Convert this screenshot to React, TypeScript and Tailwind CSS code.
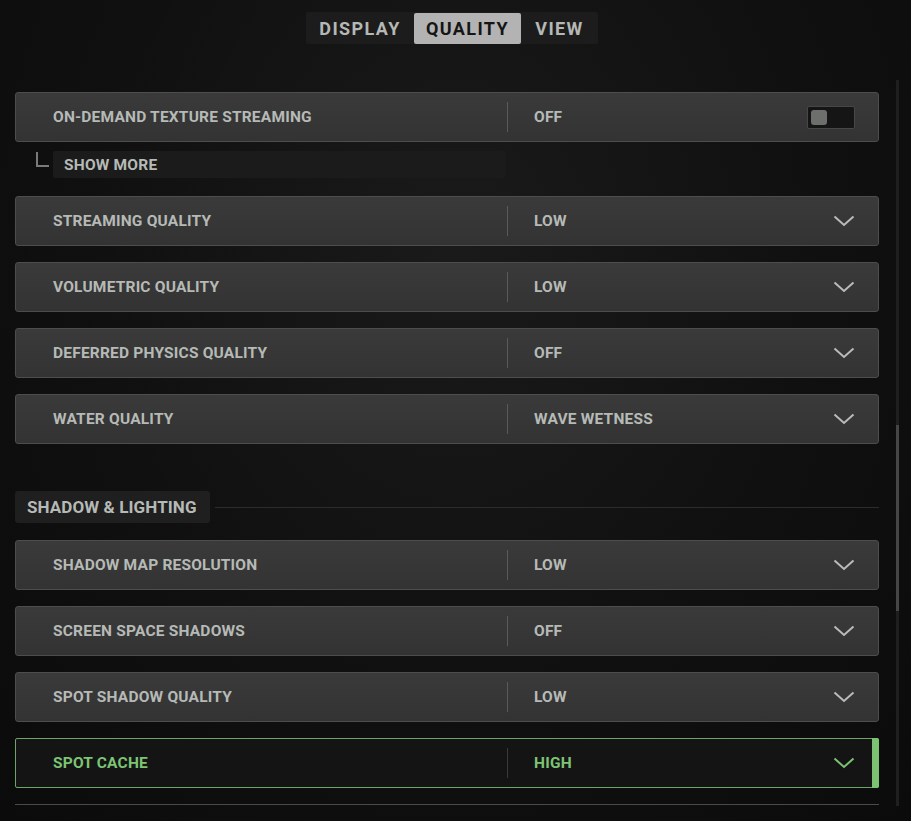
import React from "react";

const font = { fontFamily: "Roboto, 'DejaVu Sans', sans-serif" };

function Chevron({ green }: { green?: boolean }) {
  return (
    <svg width="22" height="12" viewBox="0 0 22 12" fill="none">
      <path d="M1.5 1.5 L11 10 L20.5 1.5" stroke={green ? "#7cc273" : "#b9bdb9"} strokeWidth="2" />
    </svg>
  );
}

function Row({ label, value, active }: { label: string; value: string; active?: boolean }) {
  return (
    <div
      className={
        active
          ? "relative flex h-[50px] w-[864px] items-center rounded-[2px] border border-[#6fa468] bg-[#141414]"
          : "flex h-[50px] w-[864px] items-center rounded-[3px] border border-[#4d4d4d] bg-gradient-to-b from-[#3a3a3a] to-[#333333]"
      }
    >
      <div
        className={
          "w-[491px] pl-[37px] pt-[2px] text-[15.5px] font-bold tracking-[0.2px] " +
          (active ? "text-[#7dc474]" : "text-[#b6bab6]")
        }
      >
        {label}
      </div>
      <div className={active ? "h-[30px] w-px bg-[#3a3a3a]" : "h-[30px] w-px bg-[#5a5a5a]"} />
      <div
        className={
          "flex-1 pl-[26px] pt-[2px] text-[15.5px] font-bold tracking-[0.2px] " +
          (active ? "text-[#7dc474]" : "text-[#b6bab6]")
        }
      >
        {value}
      </div>
      <div className="mr-[23px] flex items-center">
        <Chevron green={active} />
      </div>
      {active && <div className="absolute -right-px -top-px h-[50px] w-[7px] rounded-r-[2px] bg-[#7cc273]" />}
    </div>
  );
}

export default function App() {
  return (
    <div
      style={font}
      className="relative h-[821px] w-[911px] overflow-hidden bg-[radial-gradient(ellipse_at_50%_30%,#1a1a1a_0%,#101010_55%,#0b0b0b_100%)]"
    >
      <div className="flex">
        <div className="flex w-[896px] flex-col pl-[15px]">
          {/* Tabs */}
          <div className="mt-[12px] flex justify-center pr-[2px]">
            <div className="ml-[-5px] flex h-[32px] items-stretch rounded-[2px] bg-[#1c1c1c] pt-[1px] text-[18px] font-bold tracking-[1.4px]">
              <div className="flex w-[108px] items-center justify-center text-[#b5b8b5]">DISPLAY</div>
              <div className="flex w-[107px] items-center justify-center rounded-[2px] bg-[#b3b3b3] text-[#151515]">QUALITY</div>
              <div className="flex w-[77px] items-center justify-center text-[#b5b8b5]">VIEW</div>
            </div>
          </div>

          {/* Row 1 with toggle */}
          <div className="mt-[48px] flex h-[50px] w-[864px] items-center rounded-[3px] border border-[#4d4d4d] bg-gradient-to-b from-[#3a3a3a] to-[#333333]">
            <div className="w-[491px] pl-[37px] pt-[2px] text-[15.5px] font-bold tracking-[0.2px] text-[#b6bab6]">
              ON-DEMAND TEXTURE STREAMING
            </div>
            <div className="h-[30px] w-px bg-[#5a5a5a]" />
            <div className="flex-1 pl-[26px] pt-[2px] text-[15.5px] font-bold tracking-[0.2px] text-[#b6bab6]">OFF</div>
            <div className="mr-[23px] flex h-[23px] w-[48px] items-center rounded-[2px] border border-[#474747] bg-[#151515] pl-[3px]">
              <div className="h-[15px] w-[16px] rounded-[3px] bg-[#6c6f6c]" />
            </div>
          </div>

          {/* Show more */}
          <div className="mt-[9px] flex items-start">
            <div className="ml-[21px] mt-[1px] h-[15px] w-[13px] border-b-2 border-l-2 border-[#7a7a7a]" />
            <div className="ml-[4px] flex h-[27px] w-[453px] items-center rounded-[2px] bg-[#1b1b1b] pl-[11px] pt-[2px] text-[15.5px] font-bold tracking-[0.2px] text-[#b6bab6]">
              SHOW MORE
            </div>
          </div>

          <div className="mt-[18px] flex flex-col gap-[16px]">
            <Row label="STREAMING QUALITY" value="LOW" />
            <Row label="VOLUMETRIC QUALITY" value="LOW" />
            <Row label="DEFERRED PHYSICS QUALITY" value="OFF" />
            <Row label="WATER QUALITY" value="WAVE WETNESS" />
          </div>

          {/* Section header */}
          <div className="mt-[47px] flex w-[864px] items-center">
            <div className="flex h-[32px] w-[195px] items-center whitespace-nowrap rounded-[3px] bg-[#1f1f1f] pl-[12px] pt-[1px] text-[17px] font-bold tracking-[0.1px] text-[#b6bab6]">
              SHADOW &amp; LIGHTING
            </div>
            <div className="ml-[5px] h-px flex-1 bg-[#2c2c2c]" />
          </div>

          <div className="mt-[17px] flex flex-col gap-[16px]">
            <Row label="SHADOW MAP RESOLUTION" value="LOW" />
            <Row label="SCREEN SPACE SHADOWS" value="OFF" />
            <Row label="SPOT SHADOW QUALITY" value="LOW" />
            <Row label="SPOT CACHE" value="HIGH" active />
          </div>

          <div className="mt-[16px] h-px w-[864px] bg-[#4a4a4a]" />
        </div>

        {/* Scrollbar */}
        <div className="mt-[80px] flex h-[726px] w-[3px] flex-col bg-[#1f1f1f]">
          <div className="mt-[345px] h-[186px] w-[3px] bg-[#464646]" />
        </div>
      </div>
    </div>
  );
}
